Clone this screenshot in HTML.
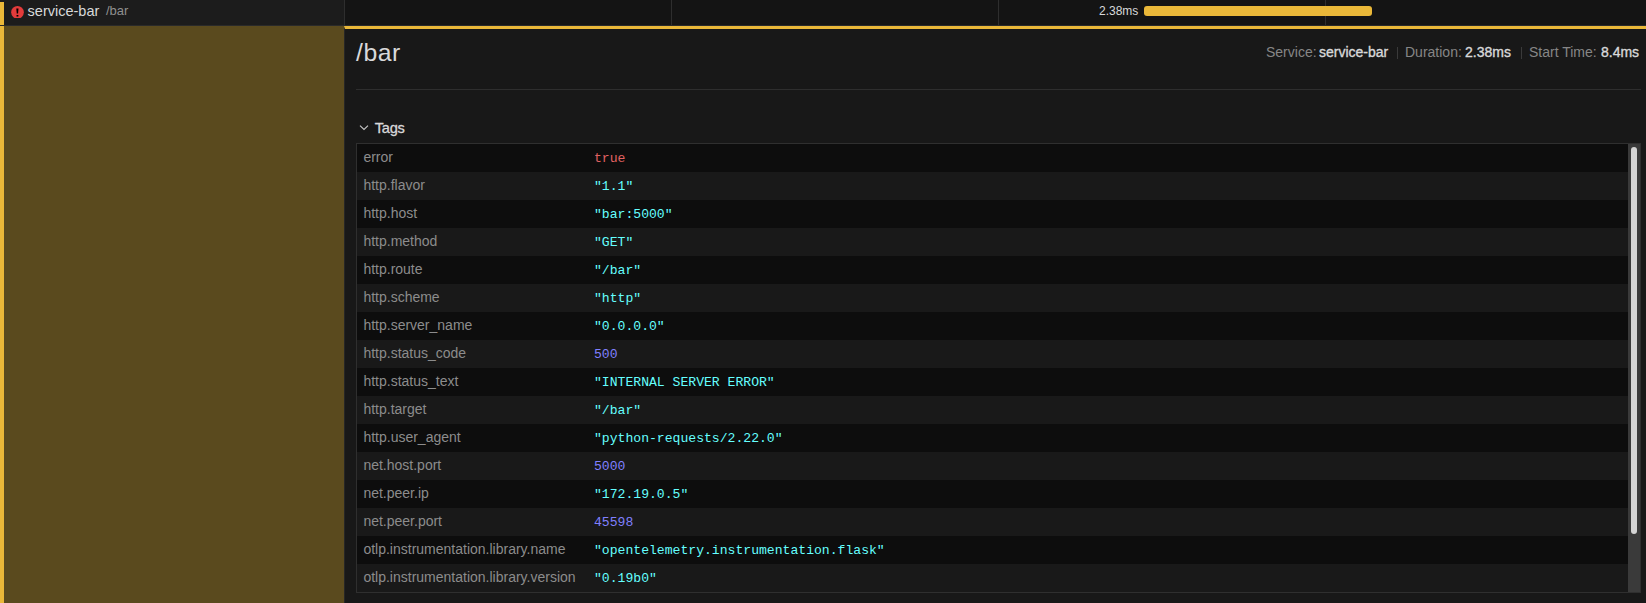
<!DOCTYPE html>
<html><head><meta charset="utf-8">
<style>
*{box-sizing:border-box;margin:0;padding:0}
html,body{width:1646px;height:603px;overflow:hidden;background:#181818;font-family:"Liberation Sans",sans-serif}
.abs{position:absolute}
#hdrL{left:0;top:0;width:344px;height:25px;background:#1c1c1c}
#hdrTop{left:0;top:0;width:344px;height:2px;background:#141414}
#acc1{left:0;top:2px;width:4px;height:23px;background:#eab839}
#vline{left:344px;top:0;width:1px;height:25px;background:#2e2e2e}
#hdrR{left:345px;top:0;width:1301px;height:25px;background:#141414}
.grid{top:0;width:1px;height:25px;background:#2e2e2e}
#rowline{left:0;top:25px;width:1646px;height:1px;background:#2a2a2a}
#olive{left:0;top:26px;width:344px;height:577px;background:#5a4a1e}
#acc2{left:0;top:26px;width:4px;height:577px;background:#eab839}
#detail{left:344px;top:26px;width:1302px;height:577px;background:#181818;border-top:3px solid #eab839;border-left:1px solid #262626}
.svc{left:27.6px;top:2.8px;font-size:14.5px;line-height:16px;color:#d8d9da;white-space:nowrap}
.svc2{left:106px;top:3px;font-size:13px;line-height:16px;color:#909090;white-space:nowrap}
#durl{left:1099px;top:4px;font-size:12px;line-height:14px;color:#d8d9da}
#bar{left:1144px;top:6px;width:228px;height:10px;background:#eab839;border-radius:3px}
#title{left:356px;top:39.3px;letter-spacing:0.5px;font-size:24.8px;line-height:28px;color:#d8d9da;white-space:nowrap}
.info{top:44px;font-size:14px;line-height:16px;color:#868686;white-space:nowrap}
.info.b{color:#d8d9da;-webkit-text-stroke:0.35px #d8d9da}
.sep{top:47px;width:1px;height:12px;background:#3a3a3a}
#hr{left:356px;top:89px;width:1285px;height:1px;background:#2e2e2e}
#chev{left:359px;top:124px}
#tags{left:374.8px;top:119.6px;font-size:14.6px;line-height:16px;color:#d8d9da;letter-spacing:-0.25px;-webkit-text-stroke:0.3px #d8d9da}
#tbl{left:356px;top:143px;width:1285px;height:450px;border:1px solid #2f2f2f;overflow:hidden}
.row{position:absolute;left:0;width:1271px;height:28px}
.row.d{background:#0d0d0d}
.row.l{background:#191919}
.k{position:absolute;left:6.4px;top:5px;font-size:14px;line-height:16px;color:#8c8c8c;white-space:nowrap}
.v{position:absolute;left:237px;top:7px;font-family:"Liberation Mono",monospace;font-size:13.1px;line-height:15px;white-space:nowrap}
.s{color:#65ffff}.n{color:#8080ff}.b{color:#e16262}
#track{left:1271px;top:0;width:13px;height:448px;background:#3a3a3a}
#thumb{left:1274px;top:3px;width:6px;height:387px;background:#d4d4d4;border-radius:3px}
</style></head><body>
<div id="hdrL" class="abs"></div>
<div id="acc1" class="abs"></div>
<svg class="abs" style="left:11.1px;top:5.7px" width="13" height="12.7" viewBox="0 0 13 13"><circle cx="6.5" cy="6.5" r="6.5" fill="#e23b3b"/><path d="M5.3 2.6h2.2l-0.4 5h-1.4z" fill="#000"/><rect x="5.5" y="9.2" width="1.9" height="1.6" fill="#000"/></svg>
<div class="abs svc">service-bar</div><div class="abs svc2">/bar</div>
<div id="vline" class="abs"></div>
<div id="hdrR" class="abs"></div>
<div class="abs grid" style="left:671px"></div>
<div class="abs grid" style="left:998px"></div>
<div class="abs grid" style="left:1325px"></div>
<div id="durl" class="abs">2.38ms</div>
<div id="bar" class="abs"></div>
<div id="rowline" class="abs"></div>
<div id="olive" class="abs"></div>
<div id="acc2" class="abs"></div>
<div id="detail" class="abs"></div>
<div id="title" class="abs">/bar</div>
<div class="abs info" style="left:1266px">Service:</div><div class="abs info b" style="left:1319px">service-bar</div><div class="abs sep" style="left:1397px"></div><div class="abs info" style="left:1405px">Duration:</div><div class="abs info b" style="left:1465px">2.38ms</div><div class="abs sep" style="left:1521px"></div><div class="abs info" style="left:1529px">Start Time:</div><div class="abs info b" style="left:1601px">8.4ms</div>
<div id="hr" class="abs"></div>
<svg id="chev" class="abs" width="10" height="8" viewBox="0 0 10 8"><path d="M1 1.6L5 5.4L9 1.6" fill="none" stroke="#c8c8c8" stroke-width="1.1"/></svg>
<div id="tags" class="abs">Tags</div>
<div id="tbl" class="abs">
<div class="row d" style="top:0"><span class="k">error</span><span class="v b">true</span></div>
<div class="row l" style="top:28px"><span class="k">http.flavor</span><span class="v s">"1.1"</span></div>
<div class="row d" style="top:56px"><span class="k">http.host</span><span class="v s">"bar:5000"</span></div>
<div class="row l" style="top:84px"><span class="k">http.method</span><span class="v s">"GET"</span></div>
<div class="row d" style="top:112px"><span class="k">http.route</span><span class="v s">"/bar"</span></div>
<div class="row l" style="top:140px"><span class="k">http.scheme</span><span class="v s">"http"</span></div>
<div class="row d" style="top:168px"><span class="k">http.server_name</span><span class="v s">"0.0.0.0"</span></div>
<div class="row l" style="top:196px"><span class="k">http.status_code</span><span class="v n">500</span></div>
<div class="row d" style="top:224px"><span class="k">http.status_text</span><span class="v s">"INTERNAL SERVER ERROR"</span></div>
<div class="row l" style="top:252px"><span class="k">http.target</span><span class="v s">"/bar"</span></div>
<div class="row d" style="top:280px"><span class="k">http.user_agent</span><span class="v s">"python-requests/2.22.0"</span></div>
<div class="row l" style="top:308px"><span class="k">net.host.port</span><span class="v n">5000</span></div>
<div class="row d" style="top:336px"><span class="k">net.peer.ip</span><span class="v s">"172.19.0.5"</span></div>
<div class="row l" style="top:364px"><span class="k">net.peer.port</span><span class="v n">45598</span></div>
<div class="row d" style="top:392px"><span class="k">otlp.instrumentation.library.name</span><span class="v s">"opentelemetry.instrumentation.flask"</span></div>
<div class="row l" style="top:420px"><span class="k">otlp.instrumentation.library.version</span><span class="v s">"0.19b0"</span></div>
<div id="track" class="abs"></div>
<div id="thumb" class="abs"></div>
</div>
</body></html>
